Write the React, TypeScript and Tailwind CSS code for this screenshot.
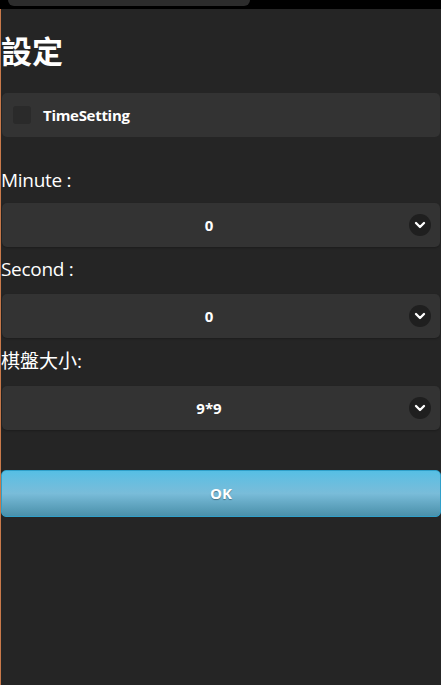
import { ChevronDown } from "lucide-react";

const Select = ({ value }: { value: string }) => (
  <div className="relative mx-px flex h-[44px] items-center justify-center rounded-[5px] bg-[#333333] pr-[24px] shadow-[0_1px_2px_rgba(0,0,0,0.25)]">
    <span className="text-[15px] font-bold text-white">{value}</span>
    <span className="absolute right-[9px] top-1/2 flex h-[22px] w-[22px] -translate-y-1/2 items-center justify-center rounded-full bg-[#1f1f1f]">
      <ChevronDown size={16} strokeWidth={3.5} className="text-white" />
    </span>
  </div>
);

export default function App() {
  return (
    <div
      className="flex h-[685px] w-[441px] flex-col bg-[#252525] text-white"
      style={{ fontFamily: '"Open Sans", "Noto Sans CJK TC", sans-serif' }}
    >
      <div className="h-[9px] bg-black pl-[8px]">
        <div className="h-[6px] w-[242px] rounded-b-[10px] bg-[#2c2c2c]" />
      </div>
      <div className="flex flex-1 flex-col border-l border-[#c8794a]">
        <h1 className="mt-[23px] text-[31px] font-bold leading-[38px]">設定</h1>
        <div className="mx-px mt-[23px] flex h-[44px] items-center rounded-[5px] bg-[#333333]">
          <span className="ml-[11px] h-[18px] w-[18px] rounded-[3px] bg-[#2a2a2a]" />
          <span className="ml-[12px] text-[15px] font-bold tracking-[-0.3px]">TimeSetting</span>
        </div>
        <label className="mt-[31px] text-[19px] leading-[24px] tracking-[-0.3px]">Minute :</label>
        <div className="mt-[11px]">
          <Select value="0" />
        </div>
        <label className="mt-[10px] text-[19px] leading-[24px] tracking-[-0.3px]">Second :</label>
        <div className="mt-[13px]">
          <Select value="0" />
        </div>
        <label className="mt-[11px] text-[19px] leading-[24px]">棋盤大小:</label>
        <div className="mt-[13px]">
          <Select value="9*9" />
        </div>
        <button className="mt-[40px] h-[47px] rounded-[5px] border border-[#2f9fc9] bg-gradient-to-b from-[#56bfe4] via-[#79bcd9] to-[#4a90aa] text-[15px] font-bold text-white [text-shadow:0_1px_1px_rgba(0,0,0,0.35)]">
          OK
        </button>
      </div>
    </div>
  );
}
